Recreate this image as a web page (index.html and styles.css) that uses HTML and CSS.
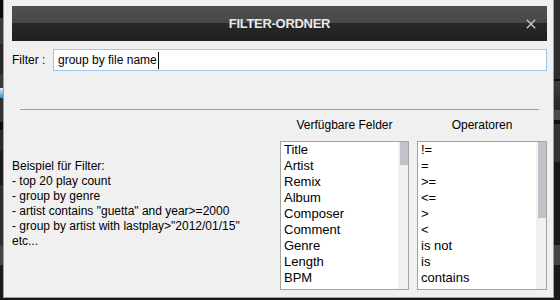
FILE: index.html
```html
<!DOCTYPE html>
<html lang="de">
<head>
  <meta charset="UTF-8">
  <title>Filter-Ordner</title>
  <link rel="stylesheet" href="styles.css">
</head>
<body>

<div class="backdrop-left"></div>

<div class="dialog">
  <div class="title-bar">
    <span></span>
    <span class="title">FILTER-ORDNER</span>
    <svg class="close-btn" width="10" height="10" viewBox="0 0 10 10">
      <path d="M0.8 0.8 L9.2 9.2 M9.2 0.8 L0.8 9.2" stroke="#c2c2c2" stroke-width="1.5" fill="none"/>
    </svg>
  </div>

  <div class="filter-row">
    <label class="filter-label">Filter :</label>
    <div class="filter-input">group by file name<span class="caret"></span></div>
  </div>

  <div class="divider"></div>

  <div class="lower">
    <div class="examples">
      Beispiel für Filter:<br>
      - top 20 play count<br>
      - group by genre<br>
      - artist contains "guetta" and year&gt;=2000<br>
      - group by artist with lastplay&gt;"2012/01/15"<br>
      etc...
    </div>

    <div class="list-col fields-col">
      <div class="list-head">Verfügbare Felder</div>
      <div class="listbox">
        <div class="items">
          <div>Title</div>
          <div>Artist</div>
          <div>Remix</div>
          <div>Album</div>
          <div>Composer</div>
          <div>Comment</div>
          <div>Genre</div>
          <div>Length</div>
          <div>BPM</div>
          <div>Key</div>
        </div>
        <div class="scroll-track"><div class="thumb thumb-short"></div></div>
      </div>
    </div>

    <div class="list-col ops-col">
      <div class="list-head">Operatoren</div>
      <div class="listbox">
        <div class="items">
          <div>!=</div>
          <div>=</div>
          <div>&gt;=</div>
          <div>&lt;=</div>
          <div>&gt;</div>
          <div>&lt;</div>
          <div>is not</div>
          <div>is</div>
          <div>contains</div>
          <div>does not contain</div>
        </div>
        <div class="scroll-track"><div class="thumb thumb-long"></div></div>
      </div>
    </div>
  </div>
</div>

<div class="backdrop-right"></div>

</body>
</html>
```

FILE: styles.css
```css
body {
  margin: 0;
  width: 560px;
  height: 300px;
  overflow: hidden;
  display: flex;
  align-items: flex-start;
  background: #161616;
  font-family: "Liberation Sans", Arial, sans-serif;
  color: #000;
}
.backdrop-left {
  width: 3px;
  height: 300px;
  flex-shrink: 0;
  background: linear-gradient(to bottom,
    #0c0c0c 0, #0c0c0c 18px,
    #3a3a3a 18px, #3a3a3a 44px,
    #262626 44px, #262626 74px,
    #3a3a3a 74px, #3a3a3a 88px,
    #e8eef2 88px, #2a8fd0 98px,
    #333 98px, #333 122px,
    #0c0c0c 122px, #0c0c0c 130px,
    #2a2a2a 130px, #2a2a2a 150px,
    #1a1a1a 150px, #1a1a1a 185px,
    #2e2e2e 185px, #2e2e2e 245px,
    #454545 245px, #454545 265px,
    #1a1a1a 265px);
}
.backdrop-right {
  width: 6px;
  height: 300px;
  flex-shrink: 0;
  background: linear-gradient(to bottom,
    #2e2e2e 0, #2e2e2e 79px,
    #111 79px, #111 81px,
    #3c3c3c 81px, #262626 110px,
    #4a4a4a 110px, #4a4a4a 120px,
    #111 120px, #111 124px,
    #333 124px, #333 162px,
    #1a1a1a 162px, #1a1a1a 245px,
    #444 245px, #444 265px,
    #1a1a1a 265px);
}
.dialog {
  width: 551px;
  height: 298px;
  flex-shrink: 0;
  box-sizing: border-box;
  background: #f0f0f0;
  border: 1px solid #a0a0a0;
  border-top: none;
  padding: 6px 6px 0 8px;
  overflow: hidden;
}
.title-bar {
  height: 35px;
  display: grid;
  grid-template-columns: 1fr auto 1fr;
  align-items: center;
  background: linear-gradient(to bottom, #505050 0, #474747 17px, #282828 17px, #1f1f1f 100%);
}
.title {
  color: #e8e8e8;
  font-weight: bold;
  font-size: 13px;
  letter-spacing: -0.3px;
}
.close-btn {
  justify-self: end;
  margin-right: 11px;
}
.filter-row {
  display: flex;
  align-items: center;
  margin-top: 8px;
  font-size: 12px;
}
.filter-label {
  width: 41px;
  flex-shrink: 0;
}
.filter-input {
  flex: 1;
  height: 22px;
  box-sizing: border-box;
  border: 1px solid #99c9ef;
  background: #fff;
  padding-left: 4px;
  display: flex;
  align-items: center;
  font-size: 12px;
}
.caret {
  display: inline-block;
  width: 1px;
  height: 17px;
  background: #000;
  margin-left: 1px;
}
.divider {
  height: 1px;
  background: #a0a0a0;
  margin: 38px 8px 0 8px;
}
.lower {
  display: flex;
  gap: 8px;
  font-size: 12px;
}
.examples {
  flex: 1;
  margin-top: 49px;
  line-height: 15px;
}
.list-col {
  display: flex;
  flex-direction: column;
}
.fields-col {
  width: 129px;
}
.ops-col {
  width: 130px;
}
.list-head {
  margin-top: 8px;
  line-height: 15px;
  text-align: center;
}
.listbox {
  margin-top: 8px;
  height: 149px;
  box-sizing: border-box;
  border: 1px solid #a3a3a3;
  background: #fff;
  display: flex;
  overflow: hidden;
}
.items {
  flex: 1;
  padding: 0 3px;
  font-size: 13px;
  line-height: 16px;
  white-space: nowrap;
  overflow: hidden;
}
.scroll-track {
  width: 10px;
  background: #f0f0f0;
  padding-left: 2px;
  box-sizing: border-box;
}
.thumb {
  background: #c2c3c9;
}
.thumb-short {
  height: 23px;
}
.thumb-long {
  height: 76px;
}
```
